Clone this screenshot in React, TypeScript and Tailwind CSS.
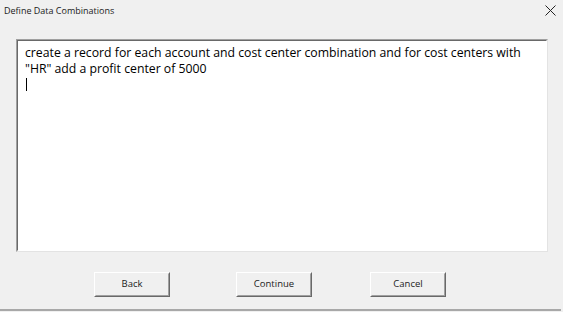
import React from "react";

export default function App() {
  return (
    <div
      className="relative w-[563px] h-[312px] bg-[#f0f0f0] overflow-hidden"
      style={{ fontFamily: '"Open Sans", "Noto Sans", sans-serif' }}
    >
      <div className="flex h-[20px] items-center justify-between pl-[4px] pr-[7px]">
        <span className="text-[9px] leading-none text-[#1a1a1a]">
          Define Data Combinations
        </span>
        <svg width="11" height="11" viewBox="0 0 11 11" className="mt-[0px]">
          <path d="M0.5 0.5 L10.5 10.5 M10.5 0.5 L0.5 10.5" stroke="#222" strokeWidth="1" />
        </svg>
      </div>
      <div className="ml-[16px] mt-[19px] w-[532px] h-[213px] border border-t-[#a0a0a0] border-l-[#a0a0a0] border-r-[#e3e3e3] border-b-[#e3e3e3]">
        <div className="w-full h-full bg-white border border-t-[#696969] border-l-[#696969] border-r-white border-b-white pl-[7px] pt-[4px]">
          <p className="text-[12.25px] leading-[16px] text-black">
            create a record for each account and cost center combination and for cost centers with
            <br />
            "HR" add a profit center of 5000
          </p>
          <div className="w-[1px] h-[13px] bg-black mt-[1px] ml-[1px]" />
        </div>
      </div>
      <div className="flex mt-[20px] text-[9.5px] text-[#222]">
        <Btn className="ml-[94px]">Back</Btn>
        <Btn className="ml-[66px]">Continue</Btn>
        <Btn className="ml-[58px]">Cancel</Btn>
      </div>
      <div className="absolute left-0 right-[2px] bottom-[1px] h-[2px] bg-[#a8a8a8]" />
    </div>
  );
}

function Btn({ children, className }: { children: React.ReactNode; className?: string }) {
  return (
    <div className={"w-[76px] h-[25px] border border-t-white border-l-white border-r-[#696969] border-b-[#696969] " + className}>
      <div className="w-full h-full flex items-center justify-center border border-t-[#f0f0f0] border-l-[#f0f0f0] border-r-[#a0a0a0] border-b-[#a0a0a0] bg-[#f0f0f0]">
        {children}
      </div>
    </div>
  );
}
